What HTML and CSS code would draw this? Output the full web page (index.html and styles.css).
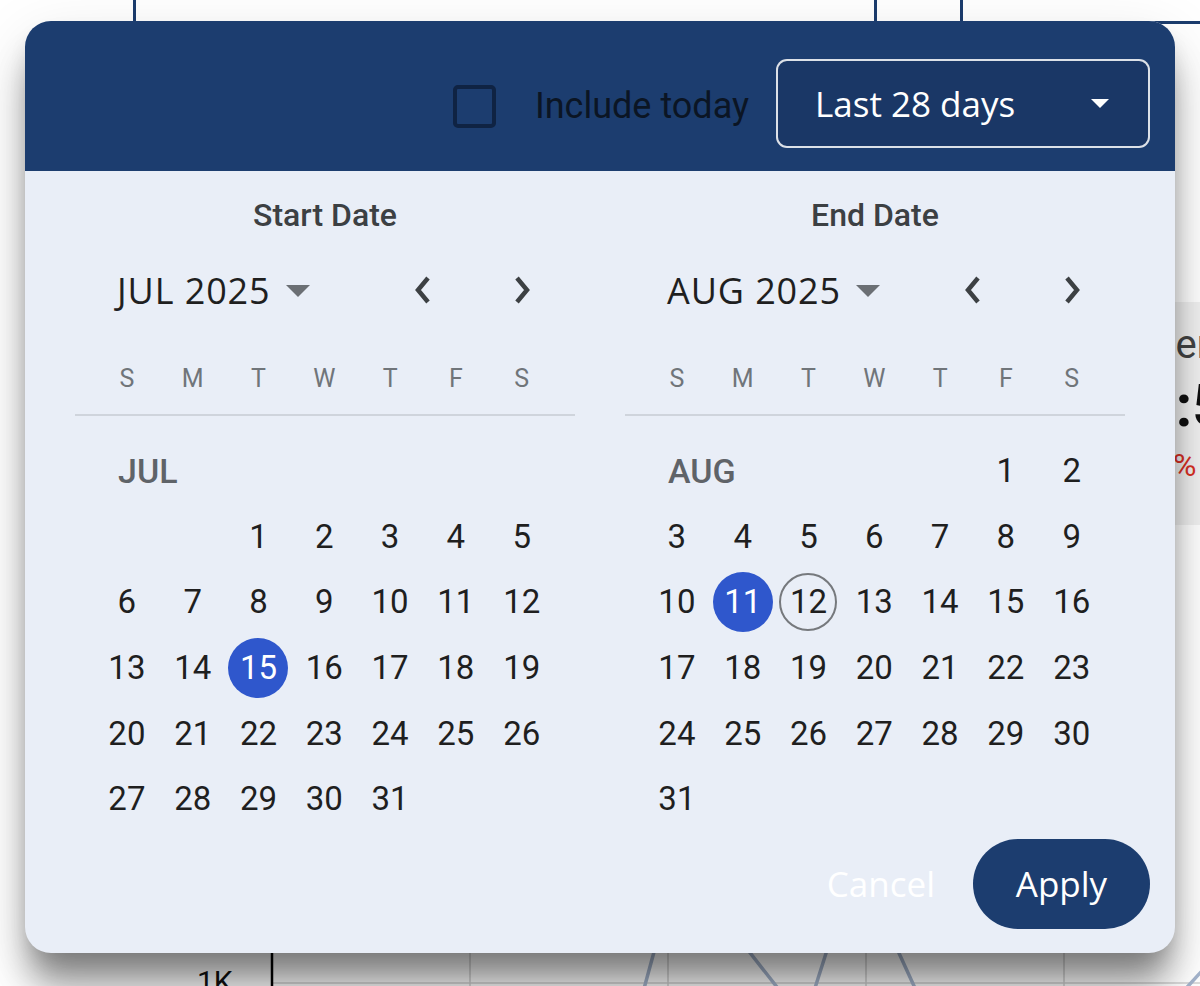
FILE: index.html
```html
<!DOCTYPE html>
<html lang="en">
<head>
<meta charset="utf-8">
<title>Date range picker</title>
<link rel="stylesheet" href="styles.css">
</head>
<body>
<div class="page">
  <div class="topbar">
    <div class="tab-a"></div>
    <div class="tab-b"></div>
  </div>
  <div class="cards">
    <div class="card">
      <div class="card-label">Users</div>
      <div class="card-value">1:54</div>
      <div class="card-delta">12%</div>
    </div>
  </div>
  <div class="chart">
    <svg class="chart-svg" width="1200" height="140" viewBox="0 846 1200 140">
      <line x1="470" y1="846" x2="470" y2="986" class="grid"/>
      <line x1="668" y1="846" x2="668" y2="986" class="grid"/>
      <line x1="866" y1="846" x2="866" y2="986" class="grid"/>
      <line x1="1064" y1="846" x2="1064" y2="986" class="grid"/>
      <line x1="272" y1="983" x2="1200" y2="983" class="grid"/>
      <line x1="272" y1="846" x2="272" y2="986" class="axis"/>
      <text x="197" y="992" class="axis-label">1K</text>
      <polyline class="series" points="630,1040 660,930 740,940 795,1010 808,1010 835,925 893,940 925,1010 1000,1050 1180,995 1230,940"/>
    </svg>
  </div>
</div>

<div class="dialog">
  <div class="dialog-head">
    <span class="checkbox"></span>
    <span class="include">Include today</span>
    <div class="preset">
      <span class="preset-text">Last 28 days</span>
      <svg class="preset-arrow" width="18" height="9" viewBox="0 0 18 9"><path d="M0 0h18L9 9z"/></svg>
    </div>
  </div>

  <div class="dialog-body">
    <section class="cal">
      <div class="cal-title">Start Date</div>
      <div class="cal-month">
        <span class="month-name">JUL 2025</span>
        <svg class="month-caret" width="24" height="12" viewBox="0 0 24 12"><path d="M0 0h24L12 12z"/></svg>
        <div class="nav">
          <svg class="chev" width="20" height="30" viewBox="0 0 20 30"><polyline points="15,3 5,15 15,27"/></svg>
          <svg class="chev" width="20" height="30" viewBox="0 0 20 30"><polyline points="5,3 15,15 5,27"/></svg>
        </div>
      </div>
      <div class="weekdays"><span>S</span><span>M</span><span>T</span><span>W</span><span>T</span><span>F</span><span>S</span></div>
      <div class="divider"></div>
      <div class="days">
        <div class="label full">JUL</div>
        <div class="c"></div><div class="c"></div>
        <div class="c"><span>1</span></div><div class="c"><span>2</span></div><div class="c"><span>3</span></div><div class="c"><span>4</span></div><div class="c"><span>5</span></div>
        <div class="c"><span>6</span></div><div class="c"><span>7</span></div><div class="c"><span>8</span></div><div class="c"><span>9</span></div><div class="c"><span>10</span></div><div class="c"><span>11</span></div><div class="c"><span>12</span></div>
        <div class="c"><span>13</span></div><div class="c"><span>14</span></div><div class="c"><span class="sel">15</span></div><div class="c"><span>16</span></div><div class="c"><span>17</span></div><div class="c"><span>18</span></div><div class="c"><span>19</span></div>
        <div class="c"><span>20</span></div><div class="c"><span>21</span></div><div class="c"><span>22</span></div><div class="c"><span>23</span></div><div class="c"><span>24</span></div><div class="c"><span>25</span></div><div class="c"><span>26</span></div>
        <div class="c"><span>27</span></div><div class="c"><span>28</span></div><div class="c"><span>29</span></div><div class="c"><span>30</span></div><div class="c"><span>31</span></div>
      </div>
    </section>

    <section class="cal">
      <div class="cal-title">End Date</div>
      <div class="cal-month">
        <span class="month-name">AUG 2025</span>
        <svg class="month-caret" width="24" height="12" viewBox="0 0 24 12"><path d="M0 0h24L12 12z"/></svg>
        <div class="nav">
          <svg class="chev" width="20" height="30" viewBox="0 0 20 30"><polyline points="15,3 5,15 15,27"/></svg>
          <svg class="chev" width="20" height="30" viewBox="0 0 20 30"><polyline points="5,3 15,15 5,27"/></svg>
        </div>
      </div>
      <div class="weekdays"><span>S</span><span>M</span><span>T</span><span>W</span><span>T</span><span>F</span><span>S</span></div>
      <div class="divider"></div>
      <div class="days">
        <div class="label span5">AUG</div>
        <div class="c"><span>1</span></div><div class="c"><span>2</span></div>
        <div class="c"><span>3</span></div><div class="c"><span>4</span></div><div class="c"><span>5</span></div><div class="c"><span>6</span></div><div class="c"><span>7</span></div><div class="c"><span>8</span></div><div class="c"><span>9</span></div>
        <div class="c"><span>10</span></div><div class="c"><span class="sel">11</span></div><div class="c"><span class="today">12</span></div><div class="c"><span>13</span></div><div class="c"><span>14</span></div><div class="c"><span>15</span></div><div class="c"><span>16</span></div>
        <div class="c"><span>17</span></div><div class="c"><span>18</span></div><div class="c"><span>19</span></div><div class="c"><span>20</span></div><div class="c"><span>21</span></div><div class="c"><span>22</span></div><div class="c"><span>23</span></div>
        <div class="c"><span>24</span></div><div class="c"><span>25</span></div><div class="c"><span>26</span></div><div class="c"><span>27</span></div><div class="c"><span>28</span></div><div class="c"><span>29</span></div><div class="c"><span>30</span></div>
        <div class="c"><span>31</span></div>
      </div>
    </section>
  </div>

  <div class="dialog-foot">
    <button class="btn-cancel">Cancel</button>
    <button class="btn-apply">Apply</button>
  </div>
</div>
</body>
</html>
```

FILE: styles.css
```css
* { box-sizing: border-box; }
html, body { margin: 0; padding: 0; }
body {
  width: 1200px;
  height: 986px;
  overflow: hidden;
  background: #ffffff;
  font-family: Roboto, "Liberation Sans", sans-serif;
  position: relative;
}

/* ---------- background page ---------- */
.page { width: 1200px; height: 986px; }
.topbar { display: flex; height: 24px; }
.tab-a {
  margin-left: 133px;
  width: 744px;
  border-left: 3px solid #1c3d6e;
  border-right: 3px solid #1c3d6e;
}
.tab-b {
  margin-left: 83px;
  flex: 1;
  border-left: 3px solid #1c3d6e;
  border-bottom: 3px solid #1c3d6e;
}
.cards { display: flex; margin-top: 278px; }
.card {
  margin-left: 1129px;
  width: 200px;
  height: 223px;
  flex: none;
  background: #f1f1f1;
  padding-top: 18px;
}
.card-label { font-size: 40px; line-height: 50px; color: #444; }
.card-value { font-size: 60px; line-height: 72px; font-weight: 700; color: #111; margin-left: 12px; }
.card-delta { font-size: 32px; line-height: 46px; color: #d93025; margin-left: 8px; }
.chart { margin-top: 321px; height: 140px; }
.chart-svg { display: block; }
.grid { stroke: #d0d0d0; stroke-width: 1.5; }
.axis { stroke: #000; stroke-width: 2.5; }
.axis-label { font-family: Roboto, sans-serif; font-size: 30px; fill: #111; }
.series { fill: none; stroke: #a4b4cc; stroke-width: 3.5; }

/* ---------- dialog ---------- */
.dialog {
  position: absolute;
  left: 25px;
  top: 21px;
  width: 1150px;
  height: 932px;
  border-radius: 26px;
  overflow: hidden;
  background: #e9eef7;
  box-shadow:
    0 36px 36px -6px rgba(0,0,0,.42),
    0 18px 60px 4px rgba(0,0,0,.10),
    0 10px 20px -4px rgba(0,0,0,.12);
}
.dialog-head {
  height: 150px;
  background: #1c3d6f;
  display: flex;
  align-items: center;
  justify-content: flex-end;
  padding: 15px 25px 0 0;
}
.checkbox {
  width: 43px;
  height: 43px;
  border: 4px solid #0f2343;
  border-radius: 5px;
  margin-right: 39px;
  margin-top: 6px;
}
.include {
  font-size: 36px;
  color: #0b1524;
  margin-right: 27px;
  margin-top: 4px;
}
.preset {
  width: 374px;
  height: 89px;
  border: 2px solid rgba(255,255,255,.85);
  border-radius: 11px;
  background: #1a3766;
  display: flex;
  align-items: center;
  justify-content: space-between;
  padding: 0 39px 0 37px;
}
.preset-text {
  font-family: "Open Sans", sans-serif;
  font-size: 35px;
  color: #ffffff;
}
.preset-arrow { fill: #ffffff; display: block; }

.dialog-body {
  display: grid;
  grid-template-columns: 500px 500px;
  column-gap: 50px;
  padding: 24px 50px 0;
}
.cal-title {
  text-align: center;
  font-size: 32px;
  font-weight: 500;
  line-height: 40px;
  color: #3c4043;
}
.cal-month {
  margin-top: 22px;
  height: 66px;
  display: flex;
  align-items: center;
  padding: 0 20px 0 42px;
}
.month-name {
  font-family: "Open Sans", sans-serif;
  font-size: 36px;
  font-weight: 500;
  letter-spacing: 0.9px;
  color: #1f1f1f;
}
.month-caret { fill: #6b6f74; margin-left: 15px; margin-top: 2px; }
.nav { margin-left: auto; display: flex; gap: 33px; }
.nav .chev {
  width: 66px;
  fill: none;
  stroke: #3c4043;
  stroke-width: 4.5;
}
.weekdays {
  margin-top: 22px;
  height: 66px;
  display: grid;
  grid-template-columns: repeat(7, 65.8px);
  padding-left: 19px;
  align-items: center;
  justify-items: center;
  font-size: 25px;
  color: #70757a;
}
.divider { margin-top: 3px; height: 2px; background: #cfd4dc; }
.days {
  margin-top: 22px;
  display: grid;
  grid-template-columns: repeat(7, 65.8px);
  grid-auto-rows: 65.6px;
  padding-left: 19px;
}
.label {
  font-size: 34px;
  font-weight: 500;
  color: #5f6368;
  display: flex;
  align-items: center;
  padding-left: 24px;
}
.label.full { grid-column: 1 / span 7; }
.label.span5 { grid-column: 1 / span 5; }
.c {
  display: flex;
  align-items: center;
  justify-content: center;
  font-size: 33px;
  color: #1f1f1f;
}
.c span {
  width: 60px;
  height: 60px;
  border-radius: 50%;
  display: flex;
  align-items: center;
  justify-content: center;
}
.c span.sel { background: #2f57cc; color: #ffffff; }
.c span.today { border: 2px solid #76797d; width: 58px; height: 58px; }

.dialog-foot {
  margin-top: 7px;
  display: flex;
  justify-content: flex-end;
  align-items: center;
  padding: 0 25px 24px 0;
}
.btn-cancel, .btn-apply {
  font-family: "Open Sans", sans-serif;
  font-size: 35px;
  font-weight: 500;
  border: none;
  cursor: pointer;
}
.btn-cancel {
  background: transparent;
  color: #ffffff;
  padding: 0;
  margin-right: 38px;
}
.btn-apply {
  width: 177px;
  height: 90px;
  border-radius: 45px;
  background: #1c3d6f;
  color: #ffffff;
}
```
